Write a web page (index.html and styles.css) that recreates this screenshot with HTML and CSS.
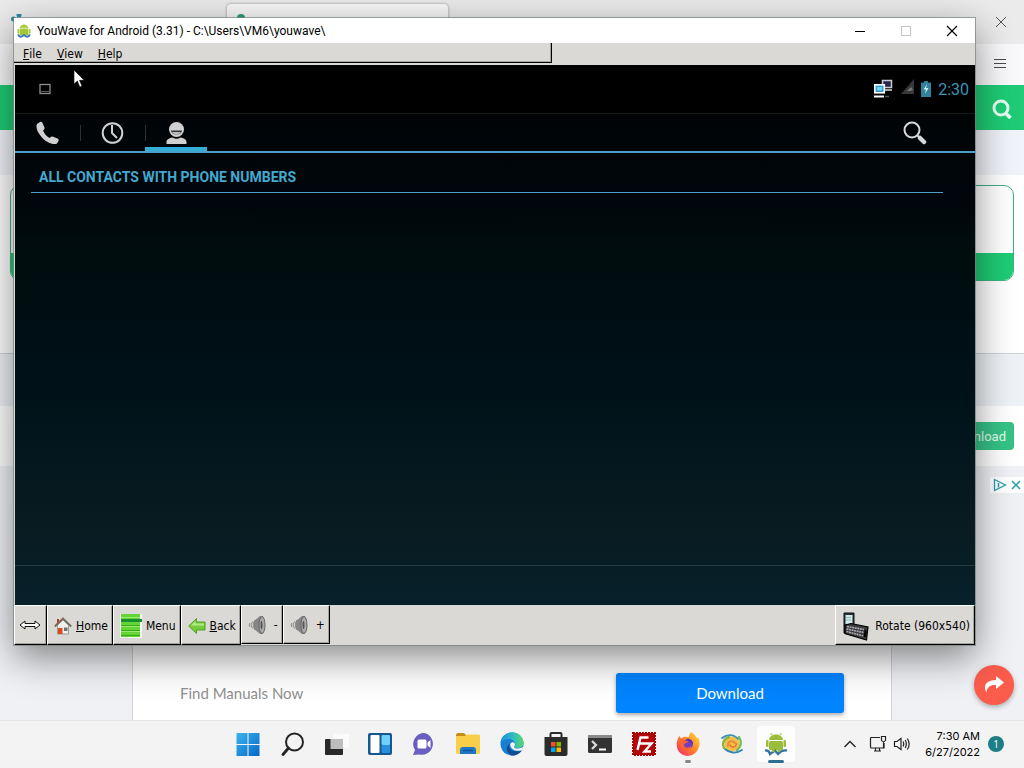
FILE: index.html
```html
<!DOCTYPE html>
<html lang="en">
<head>
  <meta charset="UTF-8">
  <title>YouWave for Android</title>
  <link rel="stylesheet" href="styles.css">
</head>
<body>
  <div class="desktop">

    <!-- browser behind the emulator -->
    <div class="browser">
      <div class="tab-strip">
        <svg class="pin" width="16" height="16" viewBox="0 0 16 16"><circle cx="8" cy="1" r="2.500" fill="#2a86a8"/><circle cx="2.500" cy="5" r="2.500" fill="#2a86a8"/></svg>
        <div class="browser-tab"><span class="favicon"></span></div>
        <button class="browser-close" aria-label="Close browser">
          <svg width="12" height="12" viewBox="0 0 12 12"><path d="M1 1L11 11M11 1L1 11" stroke="#555"/></svg>
        </button>
      </div>
      <div class="address-bar">
        <button class="hamburger" aria-label="Open menu">
          <svg width="12" height="10" viewBox="0 0 12 10"><path d="M0 .5H12M0 4.500H12M0 8.500H12" stroke="#4a4a4f"/></svg>
        </button>
      </div>
      <div class="site-header">
        <button aria-label="Search site">
          <svg width="22" height="22" viewBox="0 0 22 22" fill="none" stroke="#e6fff2"><circle cx="10" cy="10" r="7" stroke-width="3"/><path d="M15 15.500L19.500 20" stroke-width="3.500"/></svg>
        </button>
      </div>
      <div class="pale-band"></div>
      <div class="card-area"><div class="card"><div class="card-foot"></div></div></div>
      <div class="grey-band"></div>
      <div class="download-row"><button class="green-btn">Download</button></div>
      <div class="ad">
        <div class="ad-marks">
          <svg width="14" height="14" viewBox="0 0 14 14" fill="none" stroke="#2a9cad" stroke-width="1.300"><path d="M1.500 1.500L12.500 7L1.500 12.500Z"/><path d="M5.500 5V9.500" stroke-width="1.500"/></svg>
          <svg width="10" height="10" viewBox="0 0 10 10" stroke="#2a9cad" stroke-width="1.500"><path d="M1 1L9 9M9 1L1 9"/></svg>
        </div>
        <div class="ad-box">
          <span>Find Manuals Now</span>
          <button class="ad-btn">Download</button>
        </div>
      </div>
      <button class="share" aria-label="Share">
        <svg width="22" height="20" viewBox="0 0 22 20"><path d="M13 1L21 7.500L13 14V10C8 9.500 4 11.500 3.500 17.500C-0.500 10 4 5 13 5Z" fill="#fff"/></svg>
      </button>
    </div>

    <!-- taskbar -->
    <div class="taskbar">
      <div class="apps">
        <button aria-label="Start">
          <svg width="24" height="24" viewBox="0 0 24 24"><defs><linearGradient id="win" x1="0" y1="0" x2="1" y2="1"><stop offset="0" stop-color="#3bb4ee"/><stop offset="1" stop-color="#0668c6"/></linearGradient></defs><path d="M0.500 1H11.500V12H0.500ZM12.500 1H23.500V12H12.500ZM0.500 13H11.500V24H0.500ZM12.500 13H23.500V24H12.500Z" fill="url(#win)"/></svg>
        </button>
        <button aria-label="Search">
          <svg width="24" height="24" viewBox="0 0 24 24" fill="none" stroke="#252525"><circle cx="14.500" cy="10" r="8.500" stroke-width="2"/><path d="M8.500 16L3 22.500" stroke-width="2.800" stroke-linecap="round"/></svg>
        </button>
        <button aria-label="Task view">
          <svg width="26" height="24" viewBox="0 0 26 24"><rect x="10" y="2" width="16" height="14" rx="1" fill="#fbfbfb"/><rect x="2" y="7" width="18" height="16" rx="1" fill="#292929"/><rect x="7.500" y="7" width="12.500" height="10" fill="#bdbdbd"/></svg>
        </button>
        <button aria-label="Widgets">
          <svg width="24" height="24" viewBox="0 0 24 24"><rect y="1" width="24" height="22" rx="2" fill="#16578f"/><rect x="2.500" y="3" width="9" height="18" rx="1" fill="#fff"/><rect x="13.500" y="3" width="8.500" height="10" rx="1" fill="#6fd0fb"/><rect x="13.500" y="13" width="8.500" height="8" rx="1" fill="#2790e0"/></svg>
        </button>
        <button aria-label="Chat">
          <svg width="24" height="24" viewBox="0 0 24 24"><path d="M12.500 1A11 11 0 1 1 7 22.500L1 23L3 18A11 11 0 0 1 12.500 1Z" fill="#6a5fc1"/><rect x="5.500" y="7.500" width="9" height="9" rx="1.500" fill="#fff"/><path d="M15.500 10.500L18.500 8V16L15.500 13.500Z" fill="#fff"/></svg>
        </button>
        <button aria-label="File Explorer">
          <svg width="26" height="24" viewBox="0 0 26 24"><path d="M1 3C1 2 2 1 3 1H9L12 4H1Z" fill="#c58d15"/><path d="M1 4H10L12 2.500H23C24.500 2.500 25 3 25 4V20C25 21.500 24 22 23 22H3C2 22 1 21.500 1 20Z" fill="#f9cf49"/><path d="M5 22V18C5 16 6 15 8 15H18C20 15 21 16 21 18V22Z" fill="#1d77c9"/><path d="M8 18.500H18" stroke="#0f559b" stroke-width="1.500"/></svg>
        </button>
        <button aria-label="Edge">
          <svg width="24" height="24" viewBox="0 0 24 24"><defs><linearGradient id="edge" x1="0" y1="0" x2="1" y2="0"><stop offset="0" stop-color="#1d8fdc"/><stop offset="0.550" stop-color="#2fbcc4"/><stop offset="1" stop-color="#5bd86a"/></linearGradient></defs><circle cx="12" cy="12" r="11.500" fill="#1a7fd2"/><path d="M0.700 10C3 -3 22 -3 23.500 10.500C24 15.500 18 17 14 15.500C17 12 14 7 9 7C5 7 2 8.500 0.700 10Z" fill="url(#edge)"/><path d="M10 11.500C7 16 12 21.500 22 18.500C19 22.500 15 23.800 11.500 23.400C5.500 20.500 5.500 14 10 11.500Z" fill="#124c93"/><path d="M10.200 13C10 10 14 9 15 12C15.200 13.500 14 14.500 14 15.500C15.500 17 20 17 23.200 14.500C22.800 16 22.400 17.300 21.700 18.300C16 20 11 17.500 10.200 13Z" fill="#f3f3f3"/></svg>
        </button>
        <button aria-label="Store">
          <svg width="24" height="24" viewBox="0 0 24 24"><path d="M6.500 6V2Q6.500 1 7.500 1H16.500Q17.500 1 17.500 2V6" fill="none" stroke="#2c2c2c" stroke-width="2"/><path d="M0.500 5H23.500V22Q23.500 24 21.500 24H2.500Q0.500 24 0.500 22Z" fill="#2c2c2c"/><path d="M7 10H11.500V14.500H7Z" fill="#f25022"/><path d="M12.500 10H17V14.500H12.500Z" fill="#7fba00"/><path d="M7 15.500H11.500V20H7Z" fill="#00a4ef"/><path d="M12.500 15.500H17V20H12.500Z" fill="#ffb900"/></svg>
        </button>
        <button aria-label="Terminal">
          <svg width="24" height="24" viewBox="0 0 24 24"><rect y="3" width="24" height="18" rx="1.500" fill="#333"/><path d="M0 6V4.500Q0 3 1.500 3H22.500Q24 3 24 4.500V6Z" fill="#8b8b8b"/><path d="M4 9L8 13L4 17" fill="none" stroke="#ddd" stroke-width="2.200"/><path d="M11 17.500H18" stroke="#fff" stroke-width="2"/></svg>
        </button>
        <button aria-label="FileZilla">
          <svg width="24" height="24" viewBox="0 0 24 24"><rect x="1" y="1" width="22" height="22" fill="#b00808" stroke="#a00" stroke-width="2" stroke-dasharray="2 1"/><path d="M5.500 18L8.500 5.500H16.500M7.500 11.500H13M12.500 11.500H19.500L12.500 19.500H19" fill="none" stroke="#fff" stroke-width="2.400"/></svg>
        </button>
        <button aria-label="Firefox" class="running">
          <svg width="24" height="24" viewBox="0 0 24 24"><defs><linearGradient id="fox" x1="1" y1="0" x2="0" y2="1"><stop offset="0" stop-color="#ffe43d"/><stop offset="0.450" stop-color="#ff8a28"/><stop offset="1" stop-color="#f2246c"/></linearGradient></defs><path d="M15 0C18 2 20 4 21 6L22.500 6C24 10 24 15 21 19C16 26 6 25 2.500 19C-0.500 14 0.500 8 3.500 4L5 6.500C8 3.500 11 5 13 5C13 3 14 1 15 0Z" fill="url(#fox)"/><circle cx="12" cy="12" r="5" fill="#7240bf"/><path d="M3 8C7 6 9 9 12 9.500C11 11.500 8 11 8 13C8 16 12 17 15 14C15 18 9 21 5.500 16C4 14 4 11 3 8Z" fill="#fa652d"/><path d="M10 7C14 6 17 9 17 12L14 9.500Z" fill="#592bab"/></svg>
        </button>
        <button aria-label="Browser">
          <svg width="24" height="24" viewBox="0 0 24 24" fill="none" stroke-linecap="round"><circle cx="12" cy="12" r="7.500" fill="#f3c043"/><path d="M2 6C7 2 14 2 18 7" stroke="#3c8fba" stroke-width="1.800"/><path d="M19 5C22 10 21 15 17 18" stroke="#7bb85b" stroke-width="2.400"/><path d="M22 18C16 22 9 21 5 17" stroke="#2e86b8" stroke-width="1.800"/><path d="M4 16C2 12 3 7 9 5" stroke="#87b546" stroke-width="2.400"/><path d="M8 14C7 9 12 8 15 11" stroke="#ed8a3b" stroke-width="2"/><path d="M10 13C12 17 16 15 16.500 12" stroke="#e46b3b" stroke-width="1.500"/></svg>
        </button>
        <button aria-label="YouWave" class="active">
          <svg width="24" height="24" viewBox="0 0 24 24"><g fill="#9bbd3b"><path d="M5 8C5.500 0.500 18.500 0.500 19 8Z"/><rect x="5" y="9" width="14" height="9" rx="1.500"/><rect x="2" y="8" width="2.500" height="7" rx="1"/><rect x="19.500" y="8" width="2.500" height="7" rx="1"/></g><path d="M8 3L6.500 1M16 3L17.500 1" stroke="#9bbd3b"/><path d="M1 18.500Q5 18 6 22L11 18.500L14 22Q18 17.500 23 18.500" fill="none" stroke="#3673a0" stroke-width="2.300"/><path d="M8 17H10.500V20H8ZM13.500 17H16V20H13.500Z" fill="#9bbd3b"/></svg>
        </button>
      </div>
      <div class="tray">
        <button aria-label="Show hidden icons"><svg width="12" height="8" viewBox="0 0 12 8"><path d="M0.500 7L6 1.500L11.500 7" fill="none" stroke="#222" stroke-width="1.400"/></svg></button>
        <button aria-label="Network"><svg width="18" height="18" viewBox="0 0 18 18" fill="none" stroke="#222" stroke-width="1.200"><path d="M11 2.500H2.500Q1.500 2.500 1.500 3.500V12Q1.500 13 2.500 13H15V8M5 16H12M6.500 13V16M10.500 13V16"/><path d="M12.500 1.500H16.500V5.500Q14.500 8 12.500 5.500ZM14.500 7V13"/></svg></button>
        <button aria-label="Volume"><svg width="18" height="16" viewBox="0 0 18 16" fill="none" stroke="#222" stroke-width="1.200"><path d="M1.500 5.500H4L8 2.500V13.500L4 10.500H1.500Z"/><path d="M10 5.500Q11.500 8 10 10.500M12.200 4Q14.500 8 12.200 12M14.300 2.500Q18 8 14.300 13.500"/></svg></button>
        <div class="clock">7:30 AM<br>6/27/2022</div>
        <span class="badge">1</span>
      </div>
    </div>

    <!-- emulator window -->
    <div class="window">
      <div class="title-bar">
        <svg width="14" height="16" viewBox="0 0 14 16"><g fill="#a4c639"><path d="M2.500 5.500C3 0 11 0 11.500 5.500Z"/><rect x="2.500" y="6" width="9" height="6.500" rx="1"/><rect x="0.500" y="6" width="1.500" height="4.500"/><rect x="12" y="6" width="1.500" height="4.500"/></g><path d="M1 11.500Q3 15 5.500 13L7 12L8.500 13Q11 15 13 11.500" fill="none" stroke="#3a78bd" stroke-width="1.800"/><circle cx="5" cy="4" r=".6" fill="#fff"/><circle cx="9" cy="4" r=".6" fill="#fff"/></svg>
        <span class="title">YouWave for Android (3.31) - C:\Users\VM6\youwave\</span>
        <button aria-label="Minimize"><svg width="12" height="12" viewBox="0 0 12 12"><path d="M1 6.500H11" stroke="#000"/></svg></button>
        <button aria-label="Maximize" disabled><svg width="12" height="12" viewBox="0 0 12 12"><rect x="1.500" y="1.500" width="9" height="9" fill="none" stroke="#c4c4c4"/></svg></button>
        <button aria-label="Close"><svg width="12" height="12" viewBox="0 0 12 12"><path d="M1 1L11 11M11 1L1 11" stroke="#000" stroke-width="1.200"/></svg></button>
      </div>

      <div class="menu-row">
        <div class="menu-bar">
          <button><u>F</u>ile</button>
          <button><u>V</u>iew</button>
          <button><u>H</u>elp</button>
        </div>
      </div>

      <div class="android">
        <div class="status-bar">
          <svg width="12" height="12" viewBox="0 0 12 12"><rect x="1" y="1.500" width="10" height="9" fill="none" stroke="#8d8d8d" stroke-width="1.300"/><path d="M2 8.500H10" stroke="#555"/></svg>
          <div class="status-right">
            <svg class="lan" width="20" height="20" viewBox="0 0 20 20"><rect x="9.500" y="1.500" width="9" height="7" fill="#27264c" stroke="#c9cbd8" stroke-width="1.500"/><path d="M12 11H19" stroke="#ddd" stroke-width="1.500"/><rect x="1.800" y="5.800" width="9.500" height="8" fill="#2b9ed8" stroke="#fff" stroke-width="1.600"/><rect x="4" y="8" width="5" height="3.500" fill="#7bd0f0"/><path d="M1 17.500H11" stroke="#fff" stroke-width="2"/><path d="M12 17.500H16" stroke="#555" stroke-width="1.500"/></svg>
            <svg class="signal" width="14" height="20" viewBox="0 0 14 20"><path d="M14 0V15H1Z" fill="#383838"/><path d="M11 8L13 11L10 12L7 12Z" fill="#777"/></svg>
            <svg width="10" height="16" viewBox="0 0 10 16"><path d="M3 0H7V1.500H10V16H0V1.500H3Z" fill="#32809b"/><path d="M6 3L2.500 8.500H5L4 13L7.500 7H5Z" fill="#c8f4ff"/></svg>
            <span>2:30</span>
          </div>
        </div>
        <div class="phone-tabs">
          <button aria-label="Phone"><svg width="24" height="24" viewBox="0 0 24 24"><path d="M1 3L4 1C5 0.500 6 1 6.500 2L8.500 6.500C8.800 7.500 8.500 8.500 7 9.300C8 12.500 10.500 15.500 13.500 17C14.500 15.800 15.500 15.200 16.500 15.600L21.500 17.500C22.700 18 22.800 19 22.500 20L21 22.500C17.500 24.500 9.500 21 5.500 16C1 11 -0.500 6 1 3Z" fill="#d0d0d0"/></svg></button>
          <button aria-label="Recent"><svg width="24" height="24" viewBox="0 0 24 24" fill="none" stroke="#d0d0d0" stroke-width="2"><circle cx="11.500" cy="12" r="9.800"/><path d="M11 4V12L16 17"/></svg></button>
          <button aria-label="Contacts" class="selected"><svg width="24" height="24" viewBox="0 0 24 24"><circle cx="12.500" cy="8.500" r="7.500" fill="#d0d0d0"/><path d="M7 9.500H18C17.500 15 7.500 15 7 9.500Z" fill="#30363a"/><path d="M8 11H17Q12.500 17 8 11Z" fill="#bbb"/><path d="M2.500 23V21C2.500 18.500 5.500 17 8.500 16.500Q12.500 19 16.500 16.500C19.500 17 22.500 18.500 22.500 21V23Z" fill="#d0d0d0"/></svg></button>
          <button aria-label="Search contacts" class="search"><svg width="24" height="24" viewBox="0 0 24 24" fill="none" stroke="#d8d8d8"><circle cx="9" cy="9" r="7.500" stroke-width="2"/><path d="M14 14L17 17" stroke-width="2"/><path d="M17 17L21 21" stroke-width="4.500" stroke-linecap="round"/></svg></button>
        </div>
        <div class="contacts">
          <h2>ALL CONTACTS WITH PHONE NUMBERS</h2>
        </div>
        <div class="bottom-bar"></div>
      </div>

      <div class="tool-bar">
        <button class="fit" aria-label="Fit"><svg width="22" height="10" viewBox="0 0 22 10"><path d="M1 5L6 1V3.500H16V1L21 5L16 9V6.500H6V9Z" fill="#fff" stroke="#111"/></svg></button>
        <button><svg width="18" height="18" viewBox="0 0 18 18"><path d="M3.500 8L9 3L14.500 8V17H3.500Z" fill="#f1f0ea" stroke="#9c9c98"/><path d="M3 2H5V6L3 7Z" fill="#9b4033"/><path d="M0.800 9.500L9 1.500L17.200 9.500" fill="none" stroke="#6e6e66" stroke-width="1.800"/><path d="M1.500 8L9 1" stroke="#b5533a"/><rect x="4" y="11" width="4.500" height="6" fill="#d94b20"/><rect x="10" y="10.500" width="3.500" height="3.500" fill="#667478"/></svg><span><u>H</u>ome</span></button>
        <button><svg width="22" height="24" viewBox="0 0 22 24"><rect width="22" height="24" fill="#f8fff2"/><path d="M1 0H20V23H1Z" fill="#63d534"/><path d="M1 5H22V8H1Z" fill="#17912f"/><path d="M1 11.500H20M1 16.500H20M1 21.500H20" stroke="#38ab1b"/><path d="M1 12.500H20M1 17.500H20M1 3.500H20" stroke="#9be873"/></svg><span>Menu</span></button>
        <button><svg width="18" height="18" viewBox="0 0 18 18"><path d="M0.700 9L8.500 1.500V5H17V13H8.500V16.500Z" fill="#78cc3c" stroke="#4fa026"/><path d="M3 8.500L7.500 4V6.500H16V8.500Z" fill="#b2ea80"/></svg><span><u>B</u>ack</span></button>
        <button class="volume" aria-label="Volume down"><svg width="18" height="20" viewBox="0 0 18 20"><path d="M6 6L12 1H15V19H12L6 14Z" fill="#858585"/><ellipse cx="14" cy="10" rx="3" ry="8.500" fill="#aaa" stroke="#666"/><ellipse cx="13.500" cy="10" rx="1" ry="4" fill="#555"/><path d="M7 5Q3.500 10 7 15M4.500 6.500Q1.500 10 4.500 13.500M2 8Q0 10 2 12" fill="none" stroke="#888"/></svg><span>-</span></button>
        <button class="volume" aria-label="Volume up"><svg width="18" height="20" viewBox="0 0 18 20"><path d="M6 6L12 1H15V19H12L6 14Z" fill="#858585"/><ellipse cx="14" cy="10" rx="3" ry="8.500" fill="#aaa" stroke="#666"/><ellipse cx="13.500" cy="10" rx="1" ry="4" fill="#555"/><path d="M7 5Q3.500 10 7 15M4.500 6.500Q1.500 10 4.500 13.500M2 8Q0 10 2 12" fill="none" stroke="#888"/></svg><span>+</span></button>
        <button class="rotate"><svg width="26" height="30" viewBox="0 0 26 30"><path d="M1 2H11V14L8 24L1 22Z" fill="#253137" stroke="#111"/><path d="M2.500 4H9.500V13H2.500Z" fill="#d3eae9"/><path d="M3 6.500H8M3 9H8" stroke="#8fb9bb"/><path d="M2 14L8 12.500L25 16L23.500 29L2 22.500Z" fill="#3a3a3e" stroke="#000" stroke-width="1.200"/><path d="M4 15.500L21 18.500M3.500 18L20.500 21.500M3.500 20.500L20 24.800" stroke="#a9a9ae" stroke-width="1.600" stroke-dasharray="2 .6"/><path d="M22.500 19L22 26" stroke="#000" stroke-width="2"/></svg><span>Rotate (960x540)</span></button>
      </div>
    </div>

    <svg class="pointer" width="13" height="19" viewBox="0 0 13 19"><path d="M1 1V15L4.300 12L6.800 18L9 17L6.500 11.300H11.200Z" fill="#fff" stroke="#000" stroke-width=".6"/></svg>
  </div>
</body>
</html>
```

FILE: styles.css
```css
* {
  box-sizing: border-box;
}
body {
  margin: 0;
  font-family: "Open Sans", "Noto Sans", sans-serif;
  font-size: 12px;
  color: #000;
}
button {
  display: flex;
  align-items: center;
  justify-content: center;
  margin: 0;
  padding: 0;
  border: none;
  background: none;
  font: inherit;
  color: inherit;
}
svg {
  display: block;
  flex: none;
}
.desktop {
  position: relative;
  display: flex;
  flex-direction: column;
  height: 100vh;
  overflow: hidden;
}

/* browser */
.browser {
  position: relative;
  flex: 1;
  display: flex;
  flex-direction: column;
  background: #fff;
}
.tab-strip {
  display: flex;
  align-items: center;
  height: 44px;
  padding-left: 11px;
  background: #ebebec;
}
.browser-tab {
  align-self: stretch;
  width: 221px;
  margin: 4px auto 4px 200px;
  padding: 10px;
  border-radius: 4px;
  background: #f8f8f8;
  box-shadow: 0 0 3px rgba(0, 0, 0, 0.4);
}
.favicon {
  display: block;
  width: 8px;
  height: 8px;
  border-radius: 50%;
  background: #2e9d75;
}
.browser-close {
  width: 46px;
  height: 44px;
}
.address-bar {
  display: flex;
  justify-content: flex-end;
  height: 41px;
  padding: 0 18px 2px 0;
  background: #f9f9fb;
}
.site-header {
  display: flex;
  justify-content: flex-end;
  height: 45px;
  padding: 2px 11px 0 0;
  background: #1fcc75;
}
.pale-band {
  height: 45px;
  background: #f1f3fa;
}
.card-area {
  height: 178px;
  padding: 10px;
}
.card {
  display: flex;
  flex-direction: column;
  justify-content: flex-end;
  height: 96px;
  border: 1px solid #3fb083;
  border-radius: 10px;
  overflow: hidden;
}
.card-foot {
  height: 27px;
  background: #1fcc75;
}
.grey-band {
  height: 53px;
  border-top: 1px solid #cfd4d9;
  background: #eef1f5;
}
.download-row {
  display: flex;
  align-items: center;
  justify-content: flex-end;
  height: 60px;
  padding-right: 10px;
}
.green-btn {
  height: 28px;
  padding: 0 8px;
  border-radius: 4px;
  background: #36c387;
  color: #e4fff2;
  font-family: Roboto, sans-serif;
  font-size: 13px;
}
.ad {
  flex: 1;
  display: flex;
  flex-direction: column;
  align-items: center;
  padding-top: 11px;
  background: #eff1f4;
}
.ad-marks {
  display: flex;
  align-items: center;
  align-self: flex-end;
  gap: 4px;
  height: 16px;
  padding: 0 3px;
  background: #fff;
}
.ad-box {
  flex: 1;
  display: flex;
  align-items: flex-end;
  justify-content: space-between;
  width: 75%;
  max-width: 760px;
  padding: 0 47px 7px;
  border: 1px solid #d2d3d5;
  border-width: 0 1px;
  background: #fff;
  color: #8f8f8f;
  font-family: Lato, sans-serif;
  font-size: 15px;
  line-height: 40px;
}
.ad-btn {
  width: 228px;
  height: 40px;
  border-radius: 3px;
  background: #0084ff;
  color: #fff;
  box-shadow: 0 2px 4px rgba(0, 0, 0, 0.35);
}
.share {
  position: absolute;
  right: 10px;
  bottom: 15px;
  width: 40px;
  height: 40px;
  border-radius: 50%;
  background: #fb5c4c;
  box-shadow: 0 2px 5px rgba(0, 0, 0, 0.3);
}

/* taskbar */
.taskbar {
  display: grid;
  grid-template-columns: 1fr auto 1fr;
  height: 48px;
  background: #f3f3f3;
  box-shadow: inset 0 1px #e4e4e4;
}
.apps {
  grid-column: 2;
  display: flex;
}
.apps button {
  position: relative;
  width: 44px;
  height: 48px;
}
.apps .active {
  z-index: 0;
}
.apps .active::before {
  content: "";
  position: absolute;
  inset: 6px 3px;
  z-index: -1;
  border-radius: 4px;
  background: #fdfdfd;
}
.apps .running::after,
.apps .active::after {
  content: "";
  position: absolute;
  bottom: 5px;
  width: 6px;
  height: 3px;
  border-radius: 2px;
  background: #858585;
}
.apps .active::after {
  width: 16px;
  background: #2c6f91;
}
.tray {
  display: flex;
  align-items: center;
  justify-content: flex-end;
  gap: 6px;
  padding-right: 20px;
}
.tray button:first-child {
  margin-right: 7px;
}
.clock {
  width: 63px;
  margin-right: 2px;
  font-family: Inter, sans-serif;
  font-size: 11px;
  line-height: 16px;
  text-align: right;
  white-space: nowrap;
}
.badge {
  width: 16px;
  border-radius: 50%;
  background: #1d7f85;
  color: #fff;
  font-size: 10px;
  line-height: 16px;
  text-align: center;
}

/* emulator window */
.window {
  position: absolute;
  top: 18px;
  left: 14px;
  right: 49px;
  background: #dad9d5;
  box-shadow: 0 0 0 1px rgba(120, 130, 130, 0.7), 0 12px 36px rgba(0, 0, 0, 0.48);
}
.title-bar {
  display: flex;
  align-items: center;
  height: 25px;
  padding-left: 3px;
  background: #fff;
}
.title {
  margin: 0 auto 0 6px;
  font-family: Roboto, sans-serif;
}
.title-bar button {
  width: 46px;
  height: 25px;
}
.menu-row {
  height: 22px;
}
.menu-bar {
  display: flex;
  gap: 15px;
  width: 56%;
  height: 20px;
  padding: 2px 0 0 9px;
  border-right: 1px solid #000;
  border-bottom: 1px solid #000;
  box-shadow: inset -1px -1px #a5a49f;
}
.menu-bar,
.tool-bar {
  font-family: "DejaVu Sans Condensed", "DejaVu Sans", sans-serif;
  font-size: 12px;
}

/* android screen */
.android {
  display: flex;
  flex-direction: column;
  margin-left: 1px;
  aspect-ratio: 16 / 9;
  background: linear-gradient(#000304, #00060b 25%, #000d0d 34%, #000e16 50%, #001318 62%, #02151d 68%, #081b20 84%, #07202a);
  font-family: Roboto, sans-serif;
}
.status-bar {
  display: flex;
  align-items: center;
  justify-content: space-between;
  height: 48px;
  padding: 0 6px 0 24px;
  background: #000;
}
.status-right {
  display: flex;
  align-items: center;
  gap: 7px;
  color: #3993bb;
  font-size: 16px;
}
.phone-tabs {
  display: flex;
  height: 40px;
  border-top: 1px solid #15191a;
  border-bottom: 2px solid #4e9fc6;
}
.phone-tabs button {
  position: relative;
  width: 65px;
}
.phone-tabs .selected {
  width: 62px;
  box-shadow: inset 0 -4px #33aed8;
}
.phone-tabs button + button:not(.search)::before {
  content: "";
  position: absolute;
  left: 0;
  top: 11px;
  bottom: 10px;
  border-left: 1px solid #2b3031;
}
.phone-tabs .search {
  width: auto;
  margin: 0 48px 0 auto;
}
.contacts {
  flex: 1;
  padding: 10px 32px 0 16px;
}
.contacts h2 {
  margin: 0;
  padding-left: 8px;
  border-bottom: 1px solid #4e9fc6;
  color: #44a8cf;
  font-size: 14px;
  font-weight: bold;
  line-height: 29px;
}
.bottom-bar {
  height: 40px;
  border-top: 1px solid #263a42;
}

/* emulator toolbar */
.tool-bar {
  display: flex;
  height: 40px;
}
.tool-bar button {
  gap: 4px;
  padding: 1px 4px 0 6px;
  border: 1px solid #000;
  border-color: #fff #000 #000 #fff;
  box-shadow: inset -1px -1px #a5a49f;
}
.tool-bar .fit {
  padding: 0 5px 0 4px;
}
.tool-bar .volume {
  gap: 8px;
  height: 39px;
}
.tool-bar .rotate {
  margin-left: auto;
  gap: 6px;
  padding-left: 7px;
}

.pointer {
  position: absolute;
  left: 73px;
  top: 69px;
}
```
